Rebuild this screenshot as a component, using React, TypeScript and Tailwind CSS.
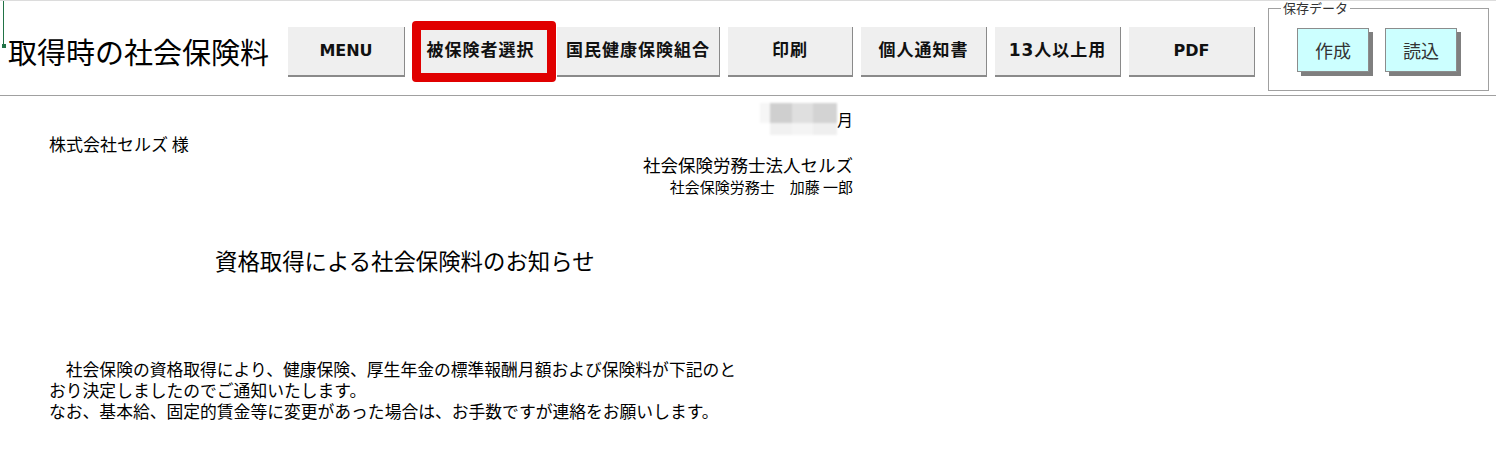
import React from "react";

const jp = "font-['Noto_Sans_CJK_JP',sans-serif]";

const toolbar = [
	{ label: "MENU", cls: "w-[117px] text-[16px]" },
	{ label: "被保険者選択", cls: "w-[136px] text-[17px] tracking-[1px]", marked: true },
	{ label: "国民健康保険組合", cls: "w-[163px] text-[17px] tracking-[1px]" },
	{ label: "印刷", cls: "w-[125px] text-[17px] tracking-[1px]" },
	{ label: "個人通知書", cls: "w-[126px] text-[17px] tracking-[1px]" },
	{ label: "13人以上用", cls: "w-[126px] text-[17px] tracking-[1px]" },
	{ label: "PDF", cls: "w-[126px] text-[16px]" },
];

function ToolButton({ label, cls, marked }: { label: string; cls: string; marked?: boolean }) {
	return (
		<div className="relative">
			<button
				className={`${cls} h-[50px] flex items-center justify-center bg-[#efefef] border-r border-b-2 border-[#8a8a8a] font-bold text-[#111] font-['DejaVu_Sans','Noto_Sans_CJK_JP',sans-serif]`}
			>
				{label}
			</button>
			{marked && (
				<div className="absolute left-[-1px] top-[-6px] w-[144px] h-[61px] border-[9px] border-[#e00000] rounded-[4px] pointer-events-none" />
			)}
		</div>
	);
}

function SavedDataGroup() {
	return (
		<fieldset className="ml-[13px] w-[221px] h-[90px] border border-[#a0a0a0] pl-[12px]">
			<legend className={`px-[2px] text-[13px] leading-[14px] text-[#333] ${jp}`}>保存データ</legend>
			<div className="flex gap-[16px] mt-[13px] ml-[16px]">
				{["作成", "読込"].map((t) => (
					<button
						key={t}
						className={`w-[72px] h-[44px] bg-[#ccffff] border border-[#8c8c8c] shadow-[4px_4px_0_#7f7f7f] text-[18px] text-[#333] ${jp}`}
					>
						{t}
					</button>
				))}
			</div>
		</fieldset>
	);
}

// blurred-out year / month digits in front of 月
function Redacted() {
	return (
		<div className="flex flex-col w-[77px] h-[32px] blur-[1px]">
			<div className="flex h-[20px]">
				<div className="w-[10px] bg-[#f6f6f6]" />
				<div className="w-[22px] bg-[#cfcfcf]" />
				<div className="w-[21px] bg-[#dfdfdf]" />
				<div className="w-[24px] bg-[#d3d3d3]" />
			</div>
			<div className="flex h-[12px]">
				<div className="w-[10px] bg-white" />
				<div className="w-[22px] bg-[#f1f1f1]" />
				<div className="w-[21px] bg-[#f4f4f4]" />
				<div className="w-[24px] bg-[#efefef]" />
			</div>
		</div>
	);
}

export default function App() {
	return (
		<div className={`w-[1496px] h-[454px] bg-white text-black overflow-hidden ${jp}`}>
			<header className="relative h-[96px] border-t border-b border-t-[#dcdcdc] border-b-[#a0a0a0] flex items-start">
				<div className="absolute left-[3px] top-0 w-px h-[44px] bg-[#217346]" />
				<div className="absolute left-[2px] top-[43px] w-[4px] h-[4px] bg-[#217346]" />

				<div className="w-[288px] h-[50px] mt-[26px] pl-[8px] flex items-center text-[29px] whitespace-nowrap">
					取得時の社会保険料
				</div>
				<div className="flex gap-2 mt-[26px]">
					{toolbar.map((b) => (
						<ToolButton key={b.label} {...b} />
					))}
				</div>
				<SavedDataGroup />
			</header>

			<main className="w-[853px]">
				<div className="flex justify-end items-start h-[31px] mt-[7px]">
					<Redacted />
					<span className="mt-[6px] text-[16px] leading-[20px]">月</span>
				</div>

				<div className="pl-[49px] text-[17px] leading-[20px]">株式会社セルズ 様</div>

				<div className="mt-[1px] text-right text-[17.5px] leading-[20px]">社会保険労務士法人セルズ</div>
				<div className="mt-[3px] text-right text-[15px] leading-[18px]">社会保険労務士　加藤 一郎</div>

				<h1 className="mt-[50px] pl-[215px] text-[22.4px] leading-[28px] whitespace-nowrap">
					資格取得による社会保険料のお知らせ
				</h1>

				<div className="mt-[85px] pl-[49px] text-[16.8px] leading-[21px] whitespace-nowrap">
					<p>　社会保険の資格取得により、健康保険、厚生年金の標準報酬月額および保険料が下記のと</p>
					<p>おり決定しましたのでご通知いたします。</p>
					<p>なお、基本給、固定的賃金等に変更があった場合は、お手数ですが連絡をお願いします。</p>
				</div>
			</main>
		</div>
	);
}
